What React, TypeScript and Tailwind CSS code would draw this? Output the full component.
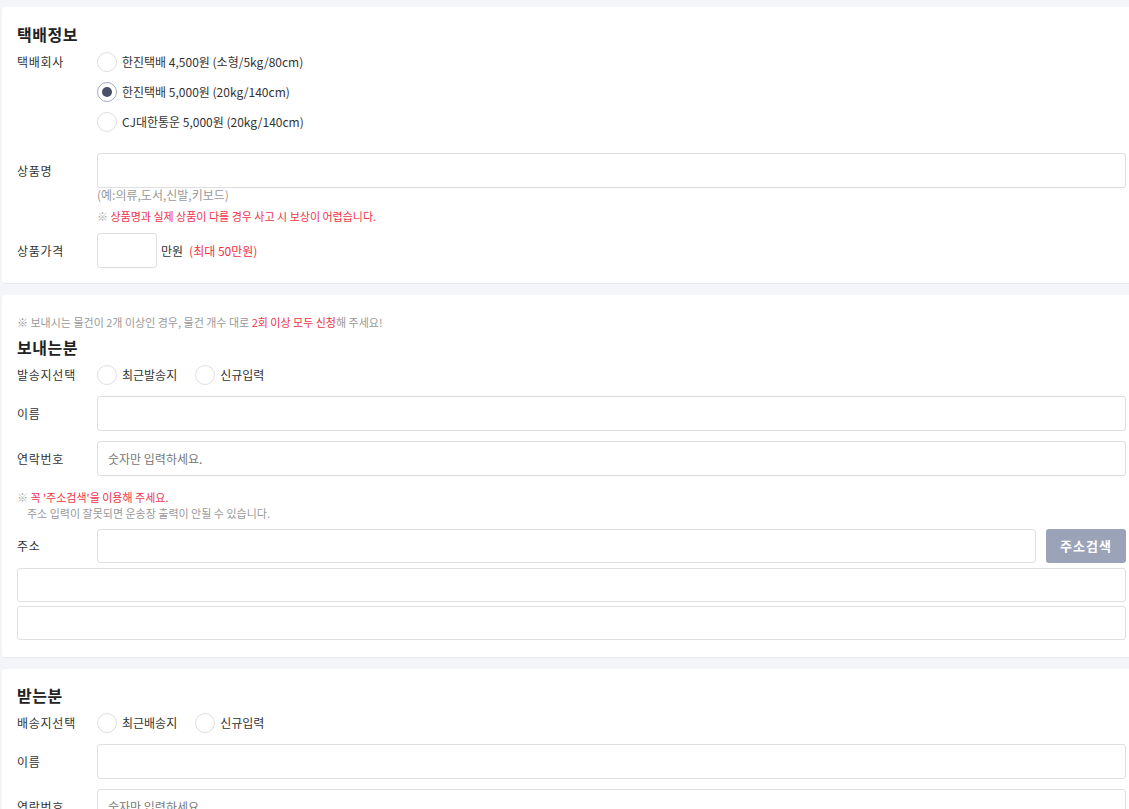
import React from "react";

const font = { fontFamily: '"Noto Sans CJK KR", "Noto Sans", sans-serif' };

function Radio({ label, checked = false }: { label: string; checked?: boolean }) {
  return (
    <label className="flex items-center gap-[5px] cursor-pointer">
      <span
        className={
          "flex h-[20px] w-[20px] shrink-0 items-center justify-center rounded-full border bg-white " +
          (checked ? "border-[#a3abc0]" : "border-[#dedede]")
        }
      >
        {checked && <span className="h-[10px] w-[10px] rounded-full bg-[#4a5066]" />}
      </span>
      <span className="text-[12px] leading-[16px] text-[#333]">{label}</span>
    </label>
  );
}

function Label({ children }: { children: React.ReactNode }) {
  return (
    <div className="w-[80px] shrink-0 text-[12px] leading-[16px] tracking-[0.75px] text-[#333]">
      {children}
    </div>
  );
}

function TextInput({ placeholder, className = "" }: { placeholder?: string; className?: string }) {
  return (
    <input
      placeholder={placeholder}
      className={
        "rounded-[3px] border border-[#dfdfdf] bg-white px-[10px] text-[12px] text-[#333] outline-none placeholder:text-[#777] " +
        className
      }
      style={font}
    />
  );
}

function Title({ children }: { children: React.ReactNode }) {
  return <h2 className="h-[22px] text-[16px] font-bold leading-[22px] tracking-[0.5px] text-[#222]">{children}</h2>;
}

function Card({ children, className = "" }: { children: React.ReactNode; className?: string }) {
  return (
    <section className={"ml-[2px] rounded-l-[3px] border-b border-[#e6e8ee] bg-white pl-[15px] pr-[3px] " + className}>
      {children}
    </section>
  );
}

function FieldRow({ label, placeholder, className = "" }: { label: string; placeholder?: string; className?: string }) {
  return (
    <div className={"flex items-center " + className}>
      <Label>{label}</Label>
      <TextInput placeholder={placeholder} className="h-[35px] flex-1" />
    </div>
  );
}

export default function App() {
  return (
    <div className="min-h-screen bg-[#f4f5f9] pt-[7px]" style={font}>
      {/* 택배정보 */}
      <Card className="pt-[16px] pb-[15px]">
        <Title>택배정보</Title>
        <div className="mt-[2px] flex">
          <div className="flex h-[30px] items-center">
            <Label>택배회사</Label>
          </div>
          <div className="flex flex-col">
            <div className="flex h-[30px] items-center">
              <Radio label="한진택배 4,500원 (소형/5kg/80cm)" />
            </div>
            <div className="flex h-[30px] items-center">
              <Radio label="한진택배 5,000원 (20kg/140cm)" checked />
            </div>
            <div className="flex h-[30px] items-center">
              <Radio label="CJ대한통운 5,000원 (20kg/140cm)" />
            </div>
          </div>
        </div>

        <FieldRow label="상품명" className="mt-[16px]" />
        <div className="pl-[80px]">
          <p className="text-[12px] leading-[14px] text-[#999]">(예:의류,도서,신발,키보드)</p>
          <p className="mt-[7px] text-[11px] leading-[14px] text-[#ee3348]">
            <span className="text-[#aaa]">※ </span>상품명과 실제 상품이 다를 경우 사고 시 보상이 어렵습니다.
          </p>
        </div>

        <div className="mt-[10px] flex items-center">
          <Label>상품가격</Label>
          <TextInput className="h-[35px] w-[60px]" />
          <span className="ml-[4px] text-[12px] text-[#333]">만원</span>
          <span className="ml-[6px] text-[12px] text-[#ee3348]">(최대 50만원)</span>
        </div>
      </Card>

      {/* 보내는분 */}
      <Card className="mt-[11px] pt-[20px] pb-[17px]">
        <p className="h-[14px] text-[11px] leading-[14px] text-[#999]">
          ※ 보내시는 물건이 2개 이상인 경우, 물건 개수 대로{" "}
          <span className="text-[#ee3348]">2회 이상 모두 신청</span>해 주세요!
        </p>
        <div className="mt-[7px]">
          <Title>보내는분</Title>
        </div>
        <div className="mt-[2px] flex h-[30px] items-center">
          <Label>발송지선택</Label>
          <div className="flex items-center gap-[18px]">
            <Radio label="최근발송지" />
            <Radio label="신규입력" />
          </div>
        </div>
        <FieldRow label="이름" className="mt-[6px]" />
        <FieldRow label="연락번호" placeholder="숫자만 입력하세요." className="mt-[10px]" />

        <div className="mt-[13px] text-[11px] leading-[16px]">
          <p className="text-[#ee3348]">
            <span className="text-[#aaa]">※ </span>꼭 '주소검색'을 이용해 주세요.
          </p>
          <p className="pl-[10px] text-[#999]">주소 입력이 잘못되면 운송장 출력이 안될 수 있습니다.</p>
        </div>

        <div className="mt-[8px] flex items-center">
          <Label>주소</Label>
          <TextInput className="h-[34px] flex-1" />
          <button className="ml-[10px] h-[34px] w-[80px] rounded-[3px] bg-[#9aa3b8] text-[13px] font-bold tracking-[1px] text-white">
            주소검색
          </button>
        </div>
        <TextInput className="mt-[5px] h-[34px] w-full" />
        <TextInput className="mt-[4px] h-[34px] w-full" />
      </Card>

      {/* 받는분 */}
      <Card className="mt-[11px] pt-[15px] pb-[17px]">
        <Title>받는분</Title>
        <div className="mt-[2px] flex h-[30px] items-center">
          <Label>배송지선택</Label>
          <div className="flex items-center gap-[18px]">
            <Radio label="최근배송지" />
            <Radio label="신규입력" />
          </div>
        </div>
        <FieldRow label="이름" className="mt-[6px]" />
        <FieldRow label="연락번호" placeholder="숫자만 입력하세요." className="mt-[10px]" />
      </Card>
    </div>
  );
}
